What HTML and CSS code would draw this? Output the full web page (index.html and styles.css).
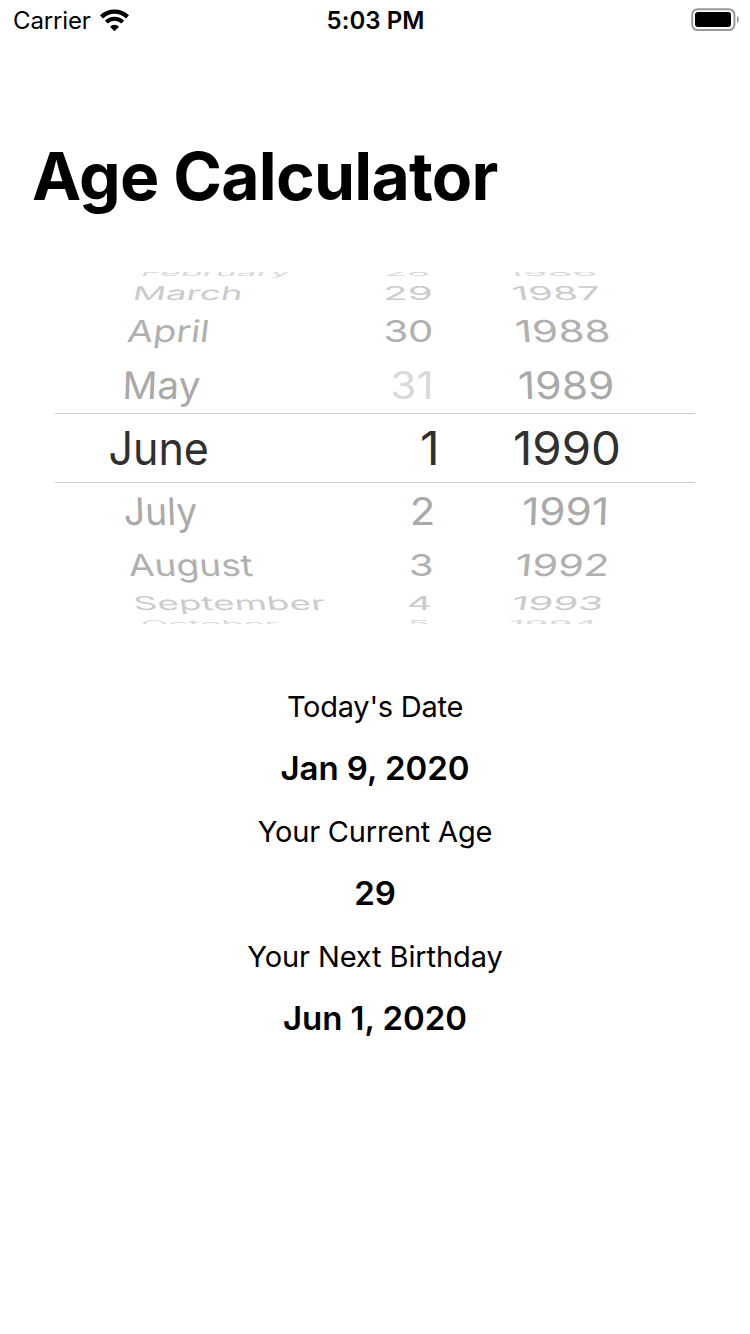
FILE: index.html
```html
<!DOCTYPE html>
<html lang="en">
<head>
<meta charset="utf-8">
<title>Age Calculator</title>
<link rel="stylesheet" href="styles.css">
</head>
<body>
<header class="status">
  <div class="status-left">
    <span class="carrier">Carrier</span>
    <svg class="wifi" width="30" height="23" viewBox="0 0 30 23" fill="none" stroke="#000">
      <path d="M1.5 7.9A18.6 18.6 0 0 1 27.5 7.9" stroke-width="4.3"/>
      <path d="M6.3 13.1A11.6 11.6 0 0 1 22.7 13.1" stroke-width="4.1"/>
      <path d="M10 17.7A6.4 6.4 0 0 1 19 17.7L14.5 22.2Z" fill="#000" stroke="none"/>
    </svg>
  </div>
  <span class="clock">5:03 PM</span>
  <div class="status-right">
    <svg class="battery" width="50" height="25" viewBox="0 0 50 25">
      <rect x="2.2" y="2.2" width="42.2" height="20.8" rx="5.4" fill="none" stroke="#999" stroke-width="2"/>
      <rect x="5" y="5" width="36" height="15" rx="3" fill="#000"/>
      <path d="M47 9C49.4 10.2 49.4 15 47 16.2Z" fill="#999"/>
    </svg>
  </div>
</header>
<main>
  <h1 class="title">Age Calculator</h1>
  <section class="picker">
    <div class="row up4"><span class="month">February</span><span class="day">28</span><span class="year">1986</span></div>
    <div class="row up3"><span class="month">March</span><span class="day">29</span><span class="year">1987</span></div>
    <div class="row up2"><span class="month">April</span><span class="day">30</span><span class="year">1988</span></div>
    <div class="row up1"><span class="month">May</span><span class="day disabled">31</span><span class="year">1989</span></div>
    <div class="row selected"><span class="month">June</span><span class="day">1</span><span class="year">1990</span></div>
    <div class="row down1"><span class="month">July</span><span class="day">2</span><span class="year">1991</span></div>
    <div class="row down2"><span class="month">August</span><span class="day">3</span><span class="year">1992</span></div>
    <div class="row down3"><span class="month">September</span><span class="day">4</span><span class="year">1993</span></div>
    <div class="row down4"><span class="month">October</span><span class="day">5</span><span class="year">1994</span></div>
    <div class="band"></div>
  </section>
  <section class="results">
    <div class="result"><p class="label today">Today's Date</p><p class="value">Jan 9, 2020</p></div>
    <div class="result"><p class="label age">Your Current Age</p><p class="value">29</p></div>
    <div class="result"><p class="label birthday">Your Next Birthday</p><p class="value">Jun 1, 2020</p></div>
  </section>
</main>
</body>
</html>
```
FILE: styles.css
```css
* { box-sizing: border-box; }
body { margin: 0; min-height: 1334px; background: #fff; color: #000; font-family: Inter, "Liberation Sans", sans-serif; }

.status { display: grid; grid-template-columns: 1fr auto 1fr; align-items: center; height: 41px; padding: 0 11px 0 13px; font-size: 24px; line-height: 40px; }
.status-left { display: flex; align-items: center; gap: 9px; }
.carrier { letter-spacing: -0.15px; }
.wifi { display: block; }
.clock { margin-left: -1px; font-weight: 600; letter-spacing: 0.05px; }
.status-right { display: flex; justify-content: flex-end; }
.battery { display: block; margin: 0 -1px 2px 0; }

.title { margin: 95px 0 0 32px; font-size: 66px; line-height: 80px; font-weight: 700; letter-spacing: -0.78px; white-space: nowrap; }

/* Date wheel: rows flatten and lean inwards the further they are from the selection. */
.picker { position: relative; margin-top: 56px; height: 352px; overflow: hidden; color: #a9a9a9; font-size: 46px; }
.row { display: grid; grid-template-columns: 380px 125px 245px; align-items: center; }
.row span { display: block; height: 0; line-height: 0; white-space: nowrap; transform-origin: 0 50%; transform: translate(var(--x), var(--y, 0px)) skewX(var(--lean, 0deg)) scale(var(--w, 1), var(--h, 1)); }

.up4, .down4 { height: 8px; --h: 0.2; color: #d9d9d9; }
.up3, .down3 { height: 26px; --h: 0.415; color: #cbcbcb; }
.up2, .down2 { height: 50px; --h: 0.655; color: #b0b0b0; }
.up1 { height: 59px; --h: 0.825; --y: -0.7px; }
.down1 { height: 58px; --h: 0.825; --y: -0.5px; }
.selected { height: 67px; --y: -1px; color: #303030; }
.up4 { --y: -3.6px; }
.down4 { --y: 3.6px; }
.disabled { color: #d9d9d9; }

.up4 .month { --x: 141px; --w: 0.77; --lean: -25deg; }
.up3 .month { --x: 133.2px; --w: 0.798; --lean: -11deg; }
.up2 .month { --x: 127.6px; --w: 0.817; --lean: -7deg; }
.up1 .month { --x: 122.6px; --w: 0.84; --lean: -2deg; }
.selected .month { --x: 108.4px; --w: 0.936; }
.down1 .month { --x: 123.7px; --w: 0.809; --lean: 2deg; }
.down2 .month { --x: 128.6px; --w: 0.808; --lean: 5deg; }
.down3 .month { --x: 133.4px; --w: 0.802; --lean: 9deg; }
.down4 .month { --x: 141px; --w: 0.777; --lean: 20deg; }

.up4 .day { --x: 3.5px; --w: 0.833; }
.up3 .day { --x: 3.1px; --w: 0.875; }
.up2 .day { --x: 3.4px; --w: 0.87; }
.up1 .day { --x: 10.3px; --w: 0.918; }
.selected .day { --x: 40px; --w: 1.05; }
.down1 .day { --x: 29.7px; --w: 0.91; }
.down2 .day { --x: 28.7px; --w: 0.875; }
.down3 .day { --x: 27px; --w: 0.84; }
.down4 .day { --x: 27.6px; --w: 0.8; }

.up4 .year { --x: 1px; --w: 0.872; --lean: 20deg; }
.up3 .year { --x: 7px; --w: 0.87; --lean: 10deg; }
.up2 .year { --x: 10px; --w: 0.915; --lean: 5deg; }
.up1 .year { --x: 13.1px; --w: 0.922; --lean: 2deg; }
.selected .year { --x: 8px; --w: 1.03; }
.down1 .year { --x: 17.1px; --w: 0.92; --lean: -2deg; }
.down2 .year { --x: 10.5px; --w: 0.903; --lean: -5deg; }
.down3 .year { --x: 7.2px; --w: 0.875; --lean: -10deg; }
.down4 .year { --x: 3.3px; --w: 0.845; --lean: -20deg; }

.band { position: absolute; top: 141px; left: 55px; right: 55px; height: 70px; border-top: 1px solid #cbcbcb; border-bottom: 1px solid #cbcbcb; }

.results { display: grid; gap: 24px; margin-top: 63px; text-align: center; }
.result { display: grid; gap: 21px; }
.result p { margin: 0; line-height: 40px; }
.label { font-size: 29px; }
.today { letter-spacing: -0.25px; }
.age { letter-spacing: -0.2px; }
.birthday { letter-spacing: -0.1px; }
.value { font-size: 33px; font-weight: 600; letter-spacing: -0.05px; }
```
